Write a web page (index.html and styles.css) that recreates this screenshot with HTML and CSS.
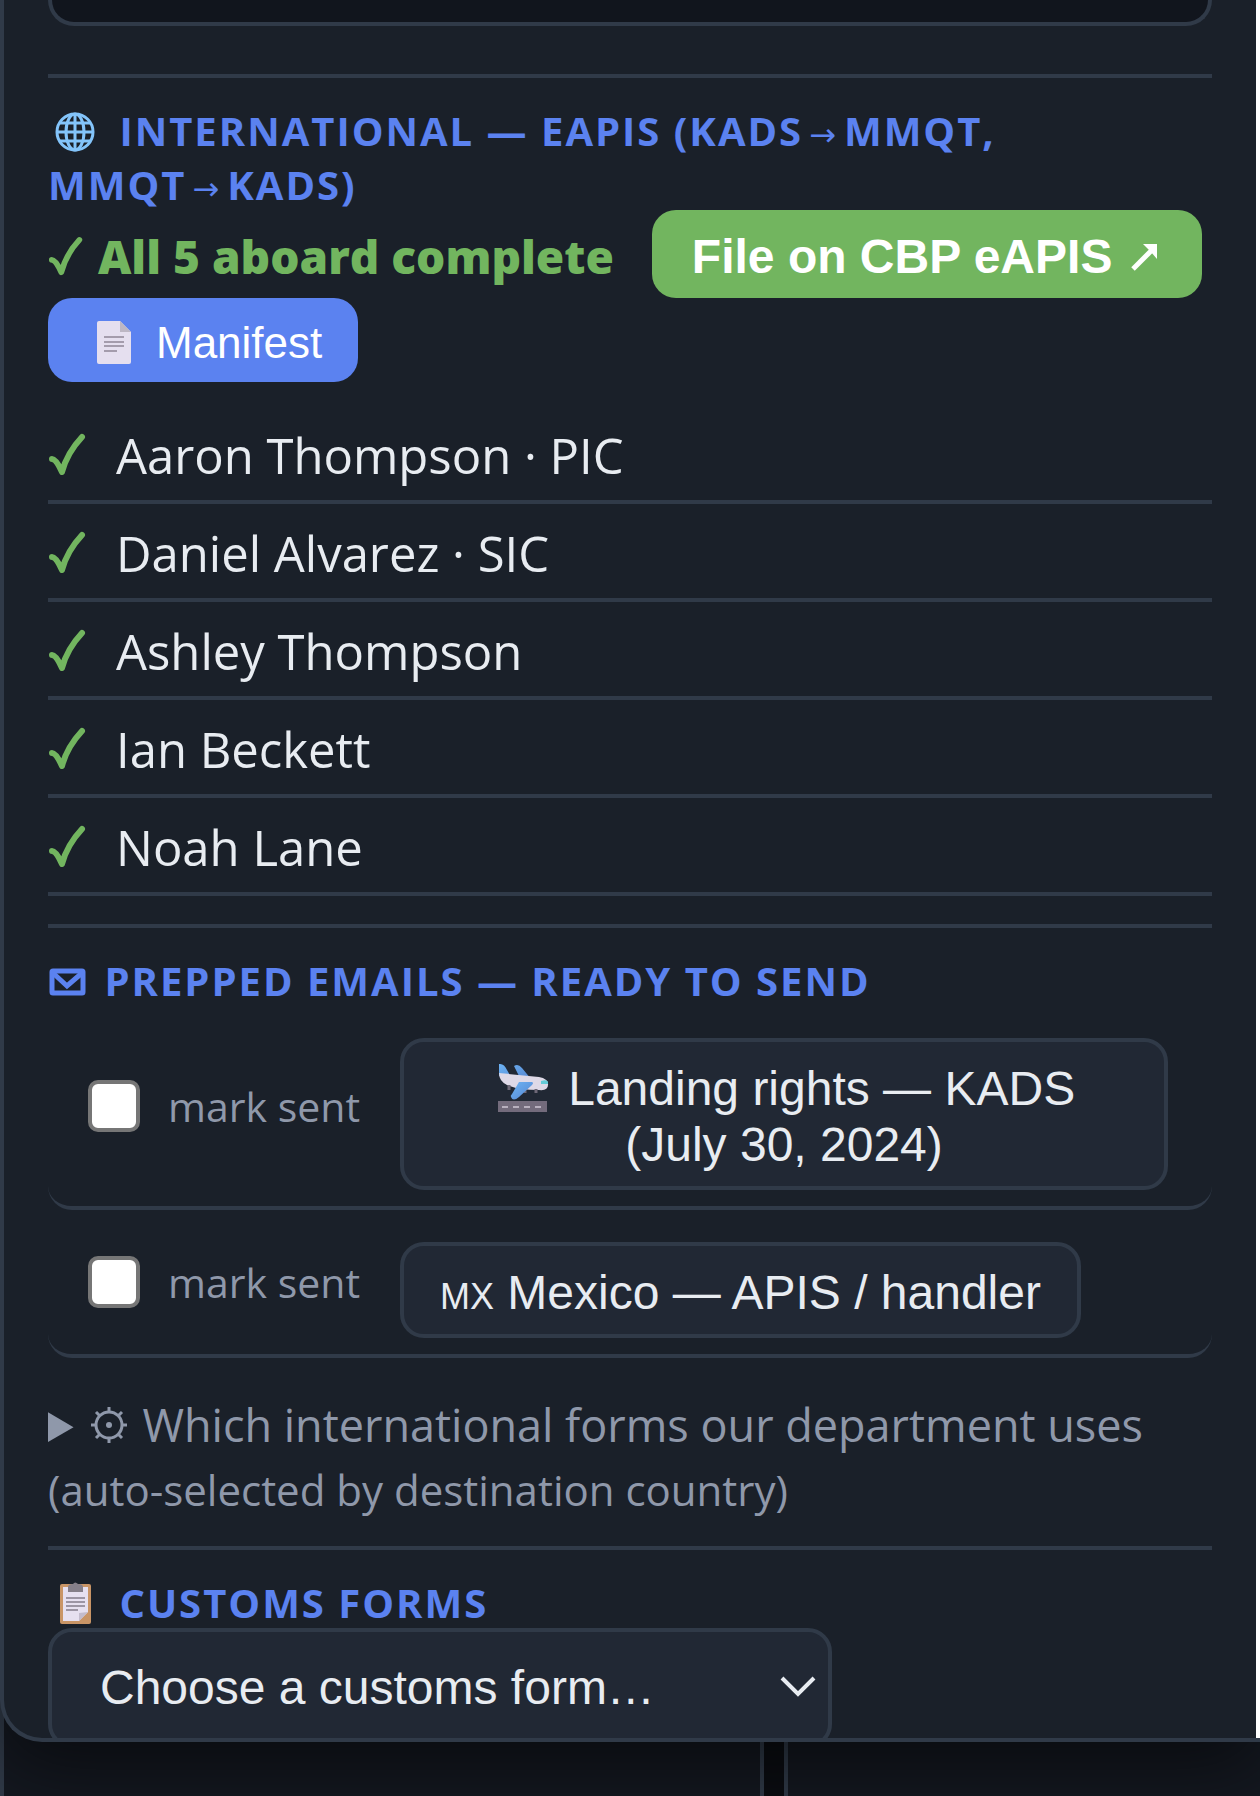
FILE: index.html
```html
<!DOCTYPE html>
<html lang="en">
<head>
	<meta charset="UTF-8">
	<title>Trip</title>
	<link rel="stylesheet" href="styles.css">
</head>
<body>
	<main class="panel">
		<div class="panel-body">
			<textarea class="notes" aria-label="Notes"></textarea>

			<section class="section first">
				<h2><svg class="emoji" viewBox="0 0 56 44"><g fill="none" stroke="#83c4fa" stroke-width="3"><circle cx="27" cy="22" r="18"/><ellipse cx="27" cy="22" rx="9" ry="18"/><path d="M27 4v36M9 22h36M12 13h30M12 31h30"/></g></svg> International — eAPIS <span class="leg">(KADS<span class="arrow">→</span>MMQT,</span> <span class="leg">MMQT<span class="arrow">→</span>KADS)</span></h2>
				<div class="status">
					<span class="complete"><svg class="check small" viewBox="0 0 40 44"><path d="M4 25Q8 25 14 38Q19 19 33 4"/></svg> All 5 aboard complete</span>
					<button type="button" class="btn file">File on CBP eAPIS <svg class="out" viewBox="0 0 32 36"><path d="M3 32L24 11" stroke="#fff" stroke-width="5" fill="none"/><path d="M13 7h14v15l-6-7z" fill="#fff"/></svg></button>
					<button type="button" class="btn manifest"><svg class="page" viewBox="0 0 60 44"><path d="M15 0h21l11 11v30a2 2 0 0 1-2 2H15a2 2 0 0 1-2-2V2a2 2 0 0 1 2-2z" fill="#e5dfef"/><path d="M36 0l11 11H36z" fill="#bdb7c4"/><path d="M20 16h20M20 21h20M20 25h20M20 30h13" stroke="#a49cac" stroke-width="2"/></svg>Manifest</button>
				</div>
				<ul class="people">
					<li><svg class="check" viewBox="0 0 40 44"><path d="M4 26Q8 26 14 39Q19 20 34 4"/></svg>Aaron Thompson · PIC</li>
					<li><svg class="check" viewBox="0 0 40 44"><path d="M4 26Q8 26 14 39Q19 20 34 4"/></svg>Daniel Alvarez · SIC</li>
					<li><svg class="check" viewBox="0 0 40 44"><path d="M4 26Q8 26 14 39Q19 20 34 4"/></svg>Ashley Thompson</li>
					<li><svg class="check" viewBox="0 0 40 44"><path d="M4 26Q8 26 14 39Q19 20 34 4"/></svg>Ian Beckett</li>
					<li><svg class="check" viewBox="0 0 40 44"><path d="M4 26Q8 26 14 39Q19 20 34 4"/></svg>Noah Lane</li>
				</ul>
			</section>

			<section class="section">
				<h2><svg class="mail" viewBox="0 0 40 30"><rect x="4" y="4" width="31" height="22" rx="1" fill="none" stroke="#5b82f0" stroke-width="5"/><path d="M5 6l14 13L34 6" fill="none" stroke="#5b82f0" stroke-width="5"/></svg> Prepped emails — ready to send</h2>
				<div class="email">
					<label><input type="checkbox">mark sent</label>
					<button type="button" class="btn draft"><svg class="plane" viewBox="0 0 62 50"><defs><linearGradient id="wing" x1="0" y1="0" x2="1" y2="1"><stop offset="0" stop-color="#6db4f5"/><stop offset="1" stop-color="#5585d0"/></linearGradient></defs><path d="M6 1q5-1 8 6l4 7-12-1zM21 3q4-3 8 2l9 11-11-1z" fill="url(#wing)"/><path d="M6 10L46 14q10 2 9 8 0 6-9 5-20 0-32-5-8-4-8-12z" fill="#ded9e7"/><path d="M16 22v5M32 26v4M43 26v4" stroke="#6e6877" stroke-width="3"/><path d="M26 19h13q2 1 0 3L26 34q-6 5-8 0-1-1 1-3z" fill="url(#wing)"/><path d="M48 18q6-2 7 1v2h-7z" fill="#64cbd7"/><path d="M5 38h49v11H5z" fill="#736b7c"/><path d="M9 44h41" stroke="#b8b0bf" stroke-width="2" stroke-dasharray="6 5"/></svg> Landing rights — KADS (July 30, 2024)</button>
				</div>
				<div class="email">
					<label><input type="checkbox">mark sent</label>
					<button type="button" class="btn draft"><span class="flag">MX</span> Mexico — APIS / handler</button>
				</div>
				<details class="forms">
					<summary><svg class="gear" viewBox="0 0 38 38"><g fill="none" stroke="#8f98aa" stroke-width="3"><circle cx="19" cy="19" r="13"/><path d="M19 1v6M19 31v6M1 19h6M31 19h6M6 6l4 4M28 28l4 4M6 32l4-4M28 10l4-4"/></g><circle cx="19" cy="19" r="3" fill="#8f98aa"/></svg> Which international forms our department uses <span class="hint">(auto-selected by destination country)</span></summary>
				</details>
			</section>

			<section class="section">
				<h2><svg class="emoji" viewBox="0 0 56 44"><rect x="12" y="2" width="31" height="40" rx="2" fill="#c99566"/><path d="M15 5h25v25l-9 9H15z" fill="#e6e0f0"/><path d="M40 30l-9 9v-8z" fill="#c3bccd"/><path d="M20 10V5q0-3 5-3 2-3 5 0 5 0 5 3v5z" fill="#857f89"/><path d="M18 16h19M18 20h19M18 24h19M18 28h12" stroke="#9c95a4" stroke-width="2"/></svg> Customs forms</h2>
				<div class="select-wrap">
					<select aria-label="Customs form">
						<option>Choose a customs form…</option>
					</select>
					<svg class="chevron" viewBox="0 0 36 24"><path d="M2 3l16 16L34 3" fill="none" stroke="#e8ecf1" stroke-width="4"/></svg>
				</div>
			</section>
		</div>
	</main>
	<div class="board">
		<div class="card"></div>
		<div class="card"></div>
	</div>
</body>
</html>
```

FILE: styles.css
```css
* {
	box-sizing: border-box;
}

body {
	margin: 0;
	height: 100vh;
	overflow: hidden;
	display: flex;
	flex-direction: column;
	background-color: #0b0d12;
	color: #e8ecf1;
	font-family: "Open Sans", "Noto Sans", sans-serif;
	font-size: 49px;
}

/* Panel */
.panel {
	flex: 1;
	min-height: 0;
	overflow: hidden;
	position: relative;
	z-index: 1;
	background-color: #1a2029;
	border-left: 4px solid #303a48;
	border-bottom: 4px solid #303a48;
	border-bottom-left-radius: 42px;
	box-shadow: 0 20px 80px rgba(0, 0, 0, 0.6);
}

.panel-body {
	height: 100%;
	overflow: hidden;
	padding: 0 44px;
	border-right: 4px solid #fff;
}

.notes {
	display: block;
	width: 100%;
	height: 26px;
	resize: none;
	background-color: #11151d;
	border: 4px solid #303a48;
	border-top: none;
	border-radius: 0 0 32px 32px;
}

.section {
	margin-top: 28px;
	padding-top: 26px;
	border-top: 4px solid #303a48;
}

.section.first {
	margin-top: 48px;
}

h2 {
	margin: 0 0 -2px;
	font-size: 40px;
	line-height: 54px;
	font-weight: 700;
	letter-spacing: 2px;
	text-transform: uppercase;
	color: #5b82f0;
}

.leg {
	white-space: nowrap;
}

.arrow {
	display: inline-block;
	margin: 0 6px;
	font-family: "DejaVu Sans", sans-serif;
	font-size: 32px;
	font-weight: 400;
	line-height: 1;
}

.emoji {
	width: 56px;
	height: 44px;
	margin-right: 3px;
	vertical-align: -8px;
}

.mail {
	width: 40px;
	height: 30px;
	margin-right: 4px;
	vertical-align: -1px;
}

/* Buttons */
.btn {
	border: none;
	border-radius: 24px;
	color: #fff;
	font-family: "Liberation Sans", Arial, sans-serif;
	font-size: 48px;
	line-height: 56px;
}

.status {
	display: flex;
	flex-wrap: wrap;
	align-items: center;
	column-gap: 38px;
}

.complete {
	padding-top: 4px;
	color: #72b55f;
	font-size: 46px;
	font-weight: 800;
	line-height: 64px;
}

.file {
	padding: 19px 40px 13px;
	background-color: #72b55f;
	font-weight: 700;
}

.out {
	width: 32px;
	height: 36px;
	margin-left: 4px;
}

.manifest {
	display: flex;
	align-items: center;
	gap: 12px;
	padding: 17px 36px 11px;
	background-color: #5b82f0;
	font-size: 44px;
}

.page {
	width: 60px;
	height: 44px;
}

/* Passenger list */
.check {
	width: 40px;
	height: 44px;
	fill: none;
	stroke: #72b55f;
	stroke-width: 6;
	stroke-linecap: round;
	stroke-linejoin: round;
}

.check.small {
	width: 38px;
	height: 42px;
	vertical-align: -4px;
}

.people {
	list-style: none;
	margin: 24px 0 0;
	padding: 0;
}

.people li {
	display: flex;
	align-items: center;
	gap: 28px;
	padding: 15px 0 11px;
	line-height: 68px;
	border-bottom: 4px solid #303a48;
}

/* Emails */
.email {
	display: flex;
	align-items: center;
	gap: 40px;
	padding: 16px 44px 16px 40px;
	border-bottom: 4px solid #303a48;
	border-radius: 24px;
}

.email label {
	flex: none;
	display: flex;
	align-items: center;
	gap: 28px;
	color: #8f98aa;
	font-size: 41px;
	line-height: 60px;
}

.email input {
	appearance: none;
	width: 52px;
	height: 52px;
	margin: 0;
	background-color: #fff;
	border: 4px solid #767676;
	border-radius: 10px;
}

.draft {
	margin-top: 16px;
	padding: 19px 36px 13px;
	background-color: #212834;
	border: 4px solid #303a48;
	color: #e8ecf1;
}

.plane {
	width: 62px;
	height: 50px;
	margin: -6px 0;
	vertical-align: -2px;
}

.flag {
	font-size: 36px;
	line-height: 1;
}

.forms {
	margin: 35px 0 -3px;
	color: #8f98aa;
	font-size: 45px;
	line-height: 64px;
}

.gear {
	width: 38px;
	height: 38px;
	margin: 0 3px 0 -6px;
	vertical-align: -2px;
}

.hint {
	font-size: 42px;
	line-height: 1;
}

/* Customs select */
.select-wrap {
	position: relative;
	width: 784px;
	max-width: 100%;
}

.select-wrap select {
	appearance: none;
	display: block;
	width: 100%;
	padding: 28px 48px;
	background-color: #212834;
	border: 4px solid #303a48;
	border-radius: 24px;
	color: #e8ecf1;
	font-family: "Liberation Sans", Arial, sans-serif;
	font-size: 48px;
	line-height: 56px;
}

.chevron {
	position: absolute;
	top: 47px;
	right: 16px;
	width: 36px;
	height: 24px;
	pointer-events: none;
}

/* Board behind the panel */
.board {
	display: grid;
	grid-template-columns: 764px 1fr;
	gap: 20px;
	height: 96px;
	margin-top: -42px;
}

.card {
	background-color: #141820;
	border: solid #303a48;
	border-width: 0 4px;
}

.card:last-child {
	border-right: none;
}
```
